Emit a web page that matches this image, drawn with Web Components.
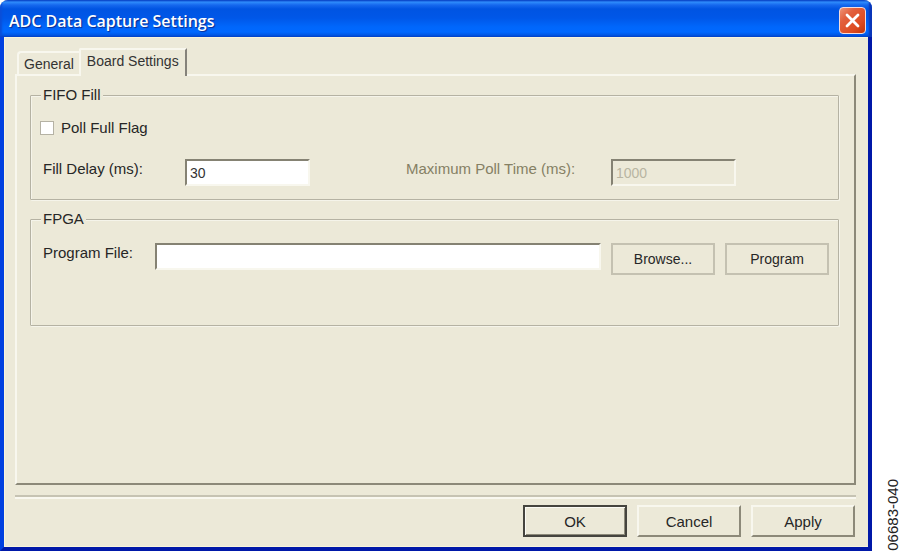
<!DOCTYPE html>
<html lang="en">
<head>
<meta charset="utf-8">
<title>ADC Data Capture Settings</title>
<style>
html { height: 100%; }
body { margin: 0; min-height: 100%; background: #fff; color: #262626; font: 15px/20px "Liberation Sans", Arial, sans-serif; }
figure-page { min-height: 100vh; }
</style>
</head>
<body>
<figure-page caption="06683-040">
  <xp-window caption="ADC Data Capture Settings">
    <xp-tabs first="General" second="Board Settings">
      <xp-group legend="FIFO Fill">
        <xp-check label="Poll Full Flag"></xp-check>
        <fill-row>
          <xp-field label="Fill Delay (ms):" value="30" style="--label: 142px; --box: 125px"></xp-field>
          <xp-field label="Maximum Poll Time (ms):" value="1000" disabled style="--label: 205px; --box: 125px"></xp-field>
        </fill-row>
      </xp-group>
      <xp-group legend="FPGA" style="--foot: 50px">
        <file-row>
          <xp-field label="Program File:" value="" style="--label: 112px; --box: 1fr"></xp-field>
          <xp-button kind="flat" label="Browse..."></xp-button>
          <xp-button kind="flat" label="Program"></xp-button>
        </file-row>
      </xp-group>
    </xp-tabs>
    <xp-button slot="footer" kind="default" label="OK"></xp-button>
    <xp-button slot="footer" kind="raised" label="Cancel"></xp-button>
    <xp-button slot="footer" kind="raised" label="Apply"></xp-button>
  </xp-window>
</figure-page>

<script>
const define = (name, render) => customElements.define(name, class extends HTMLElement {
  connectedCallback() {
    if (this.shadowRoot) return;
    this.attachShadow({ mode: "open" }).innerHTML =
      "<style>*{box-sizing:border-box}</style>" + render(this);
  }
});
const attr = (el, name) => el.getAttribute(name) || "";

define("figure-page", el => `
<style>
:host { display: flex; align-items: stretch; }
slot { display: contents; }
.id { flex: none; width: 28px; display: flex; align-items: flex-end; justify-content: flex-end; }
.id span { writing-mode: vertical-rl; transform: rotate(180deg); line-height: 14px; color: #222; }
</style>
<slot></slot><div class="id"><span>${attr(el, "caption")}</span></div>`);

define("xp-window", el => `
<style>
:host { flex: 1; display: flex; flex-direction: column; overflow: hidden; border-radius: 8px 8px 0 0; background: #ece9d8; }
header { display: flex; align-items: center; justify-content: space-between; height: 37px; padding: 4px 6px 0 9px;
  background: linear-gradient(#0a46c8 0, #2f8dfc 2px, #1668ee 5px, #0054e2 9px, #0057e8 18px, #0067fc 27px, #0068ff 32px, #0052dc 36px, #0044c4 37px);
  box-shadow: inset -3px 0 2px #0a35b8, inset 2px 0 2px #0a4fd8; }
h1 { margin: 0; color: #fff; font: 600 16px/24px "Open Sans", "Noto Sans", sans-serif; text-shadow: 1px 1px 1px #0a2c90; }
.close { width: 27px; height: 27px; padding: 0; border: 1px solid #f4dcdc; border-radius: 4px;
  background: linear-gradient(135deg, #ee9478 0, #e2603e 30%, #de4c22 70%, #c03408 100%); }
.close svg { display: block; margin: auto; }
.body { flex: 1; display: flex; flex-direction: column; padding: 11px 12px 10px 11px; border: solid; border-width: 0 4px 4px;
  border-color: #0028c0 #0018a8 #0018a8 #0040e0; box-shadow: inset 1px 0 #f8f4dc, inset 0 -1px #f8f4dc, inset 0 1px #f8f4dc; }
.content { flex: 1; display: flex; flex-direction: column; }
footer { margin-top: 10px; padding: 8px 1px 0 0; border-top: 2px solid #c6c3b3; box-shadow: inset 0 2px #f9f8f0;
  display: flex; justify-content: flex-end; gap: 10px; }
</style>
<header><h1>${attr(el, "caption")}</h1>
<button class="close" aria-label="Close"><svg width="19" height="19" viewBox="0 0 19 19"><path d="M4 4 15 15M15 4 4 15" stroke="#fff" stroke-width="2.8" stroke-linecap="round"/></svg></button></header>
<div class="body"><div class="content"><slot></slot></div><footer><slot name="footer"></slot></footer></div>`);

define("xp-tabs", el => `
<style>
:host { flex: 1; display: flex; flex-direction: column; }
nav { display: flex; align-items: flex-end; padding-left: 2px; }
button { font: 14px/20px "Liberation Sans", Arial, sans-serif; color: #333; background: #ece9d8; padding: 0 5px; border: 2px solid #f8f7ee; border-bottom: 0; border-radius: 4px 0 0 0; height: 23px; }
button:first-child { border-right: 0; }
button[aria-selected=true] { position: relative; height: 28px; margin-bottom: -2px; padding: 0 6px 4px; border-right-color: #85827a; border-radius: 2px 0 0 0; }
section { flex: 1; display: flex; flex-direction: column; gap: 11px; padding: 11px 15px 11px 13px;
  border: 2px solid; border-color: #f8f7ee #8c8979 #8c8979 #f8f7ee; }
</style>
<nav role="tablist"><button role="tab" aria-selected="false">${attr(el, "first")}</button><button role="tab" aria-selected="true">${attr(el, "second")}</button></nav>
<section role="tabpanel"><slot></slot></section>`);

define("xp-group", el => `
<style>
:host { display: block; }
fieldset { margin: 0; min-width: 0; padding: 16px 9px var(--foot, 13px) 10px; border: 1px solid #b5b2a3; border-radius: 1px;
  box-shadow: inset 1px 1px #f5f4ea, 1px 1px #f5f4ea; }
legend { padding: 0 2px; line-height: 16px; background: #ece9d8; }
</style>
<fieldset><legend>${attr(el, "legend")}</legend><slot></slot></fieldset>`);

define("xp-check", el => `
<style>
:host { display: block; margin-bottom: 22px; }
label { display: flex; align-items: center; gap: 7px; line-height: 18px; }
input { appearance: none; width: 14px; height: 14px; margin: 0 0 0 -1px; background: #fff; border: 1px solid #b5b2a4; }
</style>
<label><input type="checkbox">${attr(el, "label")}</label>`);

define("fill-row", () => `
<style>:host { display: flex; justify-content: space-between; padding: 0 93px 0 2px; }</style><slot></slot>`);

define("file-row", () => `
<style>:host { display: grid; grid-template-columns: 1fr auto auto; gap: 10px; align-items: start; padding-left: 2px; }</style><slot></slot>`);

define("xp-field", el => `
<style>
:host { display: grid; grid-template-columns: var(--label) var(--box); align-items: start; }
:host([disabled]) { color: #858064; }
input { width: 100%; min-width: 0; height: 27px; margin: 0; padding: 0 3px; font: 14px "Liberation Sans", Arial, sans-serif; color: #333; background: #fff;
  border: 2px solid; border-color: #858273 #f8f7ee #f8f7ee #858273; border-radius: 0; }
input:disabled { background: #ece9d8; color: #b8b5a2; }
</style>
<label for="box">${attr(el, "label")}</label><input id="box" type="text" value="${attr(el, "value")}"${el.hasAttribute("disabled") ? " disabled" : ""}>`);

define("xp-button", el => `
<style>
:host { display: block; }
button { display: block; width: 104px; height: 32px; padding: 0; font: 15px "Liberation Sans", Arial, sans-serif; color: #262626; background: #ece9d8; border-radius: 0; }
.flat { font-size: 14px; border: 2px solid #c4c1b1; }
.raised { border: 2px solid; border-color: #f8f7ee #8c8979 #8c8979 #f8f7ee; }
.default { border: 2px solid #45443e; box-shadow: inset 1px 1px #fbfaf4, inset -1px -1px #8c8979; }
</style>
<button type="button" class="${attr(el, "kind")}">${attr(el, "label")}</button>`);
</script>
</body>
</html>
